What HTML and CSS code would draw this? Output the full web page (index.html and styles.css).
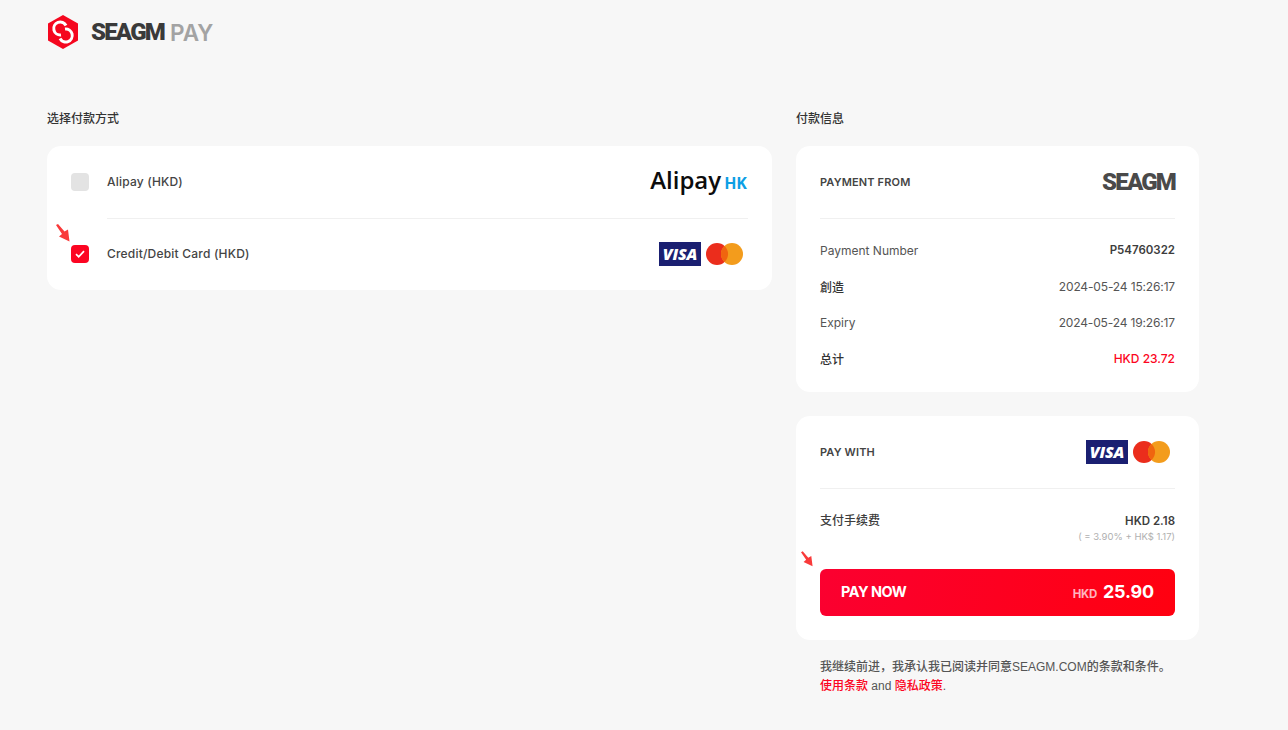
FILE: index.html
```html
<!DOCTYPE html>
<html lang="zh">
<head>
<meta charset="utf-8">
<title>SEAGM Pay</title>
<link rel="stylesheet" href="styles.css">
</head>
<body>
<svg width="0" height="0" class="defs">
  <defs>
    <g id="visa">
      <rect width="42" height="24" fill="#1a1f71"/>
      <text x="21" y="17.5" text-anchor="middle" class="visa-text">VISA</text>
    </g>
    <g id="mc">
      <circle cx="11" cy="11" r="11" fill="#eb2d1c"/>
      <circle cx="26" cy="11" r="11" fill="#f39c1c"/>
      <path d="M18.5 2.9a11 11 0 0 1 0 16.2a11 11 0 0 1 0-16.2z" fill="#f0650f"/>
    </g>
  </defs>
</svg>
<header class="topbar">
  <svg class="mark" width="30" height="34" viewBox="0 0 30 34">
    <path d="M15 0 30 8.500V25.500L15 34 0 25.500V8.500z" fill="#f5071f"/>
    <path d="M18 10.500A6.500 6.500 0 1 0 13 20M12 23.500A6.500 6.500 0 1 0 17 14" fill="none" stroke="#fff" stroke-width="3"/>
  </svg>
  <span class="brand">SEAGM</span><span class="brand-pay">PAY</span>
</header>
<main class="layout">
  <section class="col-left">
    <h2 class="col-title">选择付款方式</h2>
    <div class="card methods">
      <div class="method">
        <span class="check"></span>
        <span class="method-name">Alipay (HKD)</span>
        <span class="alipay">Alipay<span class="alipay-hk">HK</span></span>
      </div>
      <div class="method">
        <svg class="arrow arrow-a" width="14" height="18" viewBox="0 0 14 18"><path d="M0 1 2 0 8.500 7.500 12 5.500 13.500 17.500 3 12.500 6 10z" fill="#f93a3a"/></svg>
        <span class="check on"><svg width="10" height="8" viewBox="0 0 10 8"><path d="M1 4.200 3.700 6.800 9 1.200" fill="none" stroke="#fff" stroke-width="1.700"/></svg></span>
        <span class="method-name">Credit/Debit Card (HKD)</span>
        <span class="cards"><svg width="84" height="24" viewBox="0 0 84 24"><use href="#visa"/><use href="#mc" x="47" y="1"/></svg></span>
      </div>
    </div>
  </section>
  <aside class="col-right">
    <h2 class="col-title">付款信息</h2>
    <div class="card info">
      <div class="info-head">
        <span class="caps">PAYMENT FROM</span>
        <span class="brand brand-small">SEAGM</span>
      </div>
      <dl class="rows">
        <div class="row"><dt>Payment Number</dt><dd class="strong">P54760322</dd></div>
        <div class="row"><dt class="dark">創造</dt><dd>2024-05-24 15:26:17</dd></div>
        <div class="row"><dt>Expiry</dt><dd>2024-05-24 19:26:17</dd></div>
        <div class="row"><dt class="dark">总计</dt><dd class="red">HKD 23.72</dd></div>
      </dl>
    </div>
    <div class="card pay">
      <div class="info-head">
        <span class="caps">PAY WITH</span>
        <span class="cards"><svg width="84" height="24" viewBox="0 0 84 24"><use href="#visa"/><use href="#mc" x="47" y="1"/></svg></span>
      </div>
      <div class="fee">
        <span class="fee-label">支付手续费</span>
        <span class="fee-val">
          <span class="fee-amt">HKD 2.18</span>
          <span class="fee-sub">( = 3.90% + HK$ 1.17)</span>
        </span>
      </div>
      <div class="btn-wrap">
        <svg class="arrow arrow-b" width="12" height="16" viewBox="0 0 14 18"><path d="M0 1 2 0 8.500 7.500 12 5.500 13.500 17.500 3 12.500 6 10z" fill="#f93a3a"/></svg>
        <button class="paybtn" type="button">
          <span class="paynow">PAY NOW</span>
          <span class="total"><span class="total-cur">HKD</span><span class="total-amt">25.90</span></span>
        </button>
      </div>
    </div>
    <p class="terms">我继续前进，我承认我已阅读并同意SEAGM.COM的条款和条件。<br><a class="link">使用条款</a> and <a class="link">隐私政策</a>.</p>
  </aside>
</main>
</body>
</html>
```
FILE: styles.css
```css
* { box-sizing: border-box; }
html, body { margin: 0; padding: 0; }
body {
  width: 1288px;
  height: 730px;
  overflow: hidden;
  background: #f7f7f7;
  color: #3d3d3d;
  font-family: Inter, "Noto Sans CJK SC", sans-serif;
  font-size: 12px;
}
.defs { position: absolute; }
.visa-text {
  font-family: "Open Sans", sans-serif;
  font-size: 16px;
  font-weight: 800;
  font-style: italic;
  fill: #fff;
  letter-spacing: -0.2px;
}
.topbar {
  display: flex;
  align-items: center;
  height: 64px;
  padding-left: 48px;
}
.mark { margin-right: 13px; }
.brand {
  font-family: Roboto, sans-serif;
  font-size: 24px;
  font-weight: 900;
  color: #3a3a3a;
  letter-spacing: -1.8px;
  margin-right: 6px;
}
.brand-small { margin-right: 0; color: #4a4a4a; }
.brand-pay {
  font-family: Inter, sans-serif;
  font-size: 22.500px;
  font-weight: 600;
  color: #a3a3a3;
}
.layout {
  display: flex;
  gap: 24px;
  padding: 47px 0 0 47px;
}
.col-left { width: 725px; }
.col-right { width: 403px; }
.col-title {
  margin: 0 0 19px;
  font-size: 12px;
  line-height: 16px;
  font-weight: 500;
  color: #333;
}
.card {
  background: #fff;
  border-radius: 14px;
}
.methods { padding: 0 24px; }
.method {
  position: relative;
  display: flex;
  align-items: center;
  height: 72px;
}
.method + .method::before {
  content: "";
  position: absolute;
  top: 0;
  left: 36px;
  right: 0;
  border-top: 1px solid #f0f0f0;
}
.check {
  display: flex;
  align-items: center;
  justify-content: center;
  width: 18px;
  height: 18px;
  border-radius: 4px;
  background: #e3e3e3;
  margin-right: 18px;
}
.check.on { background: #fc0522; }
.method-name {
  flex: 1;
  padding-bottom: 2px;
  font-size: 12px;
  font-weight: 500;
  letter-spacing: 0.2px;
  color: #444;
}
.arrow { position: absolute; }
.arrow-a { left: -15px; top: 6px; }
.arrow-b { left: -19px; top: -18px; }
.alipay {
  font-family: "Open Sans", sans-serif;
  font-size: 24px;
  font-weight: 600;
  color: #0c0c0c;
  line-height: 24px;
  margin-right: 1px;
  padding-bottom: 2px;
}
.alipay-hk {
  font-size: 16px;
  font-weight: 700;
  color: #0d9fe5;
  margin-left: 3px;
}
.cards { display: flex; margin-right: 5px; }
.cards svg { display: block; }
.info { height: 246px; padding: 0 24px; margin-bottom: 24px; }
.pay { height: 224px; padding: 0 24px; }
.info-head {
  display: flex;
  align-items: center;
  justify-content: space-between;
  height: 73px;
  border-bottom: 1px solid #f0f0f0;
}
.caps {
  padding-bottom: 1px;
  font-size: 11px;
  font-weight: 600;
  letter-spacing: 0.15px;
  color: #444;
}
.rows { margin: 13px 0 0; }
.row {
  display: flex;
  justify-content: space-between;
  align-items: center;
  height: 36px;
}
.row dt { font-weight: 400; color: #555; }
.row dt.dark { color: #333; font-weight: 500; }
.row dd { margin: 0; color: #555; letter-spacing: -0.15px; }
.row dd.strong { font-weight: 600; color: #3d3d3d; letter-spacing: 0; font-size: 11.500px; }
.row dd.red { font-weight: 500; color: #fc0522; font-size: 12px; letter-spacing: 0; padding-top: 1px; }
.fee {
  display: flex;
  justify-content: space-between;
  padding-top: 23px;
  height: 80px;
}
.fee-label { color: #3d3d3d; line-height: 18px; font-weight: 500; }
.fee-val { display: flex; flex-direction: column; align-items: flex-end; }
.fee-amt { font-size: 11.500px; font-weight: 600; line-height: 18px; color: #3d3d3d; }
.fee-sub { font-size: 9.500px; line-height: 14px; color: #b0b0b0; }
.btn-wrap { position: relative; }
.paybtn {
  display: flex;
  align-items: center;
  justify-content: space-between;
  width: 100%;
  height: 47px;
  padding: 0 21px 2px;
  border: 0;
  border-radius: 6px;
  background: linear-gradient(100deg, #fb0030, #ff0010);
  color: #fff;
  font-family: Inter, sans-serif;
}
.paynow { font-size: 14.500px; font-weight: 700; letter-spacing: -0.5px; }
.total { display: flex; align-items: baseline; gap: 6px; }
.total-cur { font-size: 11.500px; font-weight: 700; color: #ffb3bd; letter-spacing: -0.3px; }
.total-amt { font-size: 18px; font-weight: 700; letter-spacing: -0.2px; }
.terms {
  margin: 18px 0 0;
  padding-left: 24px;
  font-family: "Liberation Sans", "Noto Sans CJK SC", sans-serif;
  font-size: 12px;
  font-weight: 500;
  line-height: 18.500px;
  color: #555;
}
.link { color: #fc0522; }
```
